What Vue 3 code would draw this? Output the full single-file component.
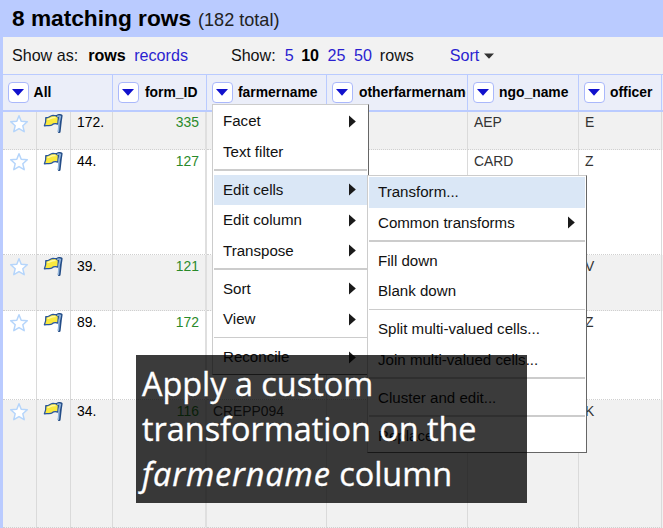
<script setup>
const columns = [
  { name: 'All', key: 'all' },
  { name: 'form_ID', key: 'form' },
  { name: 'farmername', key: 'farmer' },
  { name: 'otherfarmername', key: 'other' },
  { name: 'ngo_name', key: 'ngo' },
  { name: 'officer', key: 'officer' },
]
const rows = [
  { n: '172.', id: '335', farmer: '', ngo: 'AEP', officer: 'E' },
  { n: '44.', id: '127', farmer: '', ngo: 'CARD', officer: 'Z' },
  { n: '39.', id: '121', farmer: '', ngo: '', officer: 'V' },
  { n: '89.', id: '172', farmer: '', ngo: '', officer: 'Z' },
  { n: '34.', id: '116', farmer: 'CREPP094', ngo: '', officer: 'K' },
]
const mainMenu = [
  { label: 'Facet', sub: true },
  { label: 'Text filter' },
  null,
  { label: 'Edit cells', sub: true, active: true },
  { label: 'Edit column', sub: true },
  { label: 'Transpose', sub: true },
  null,
  { label: 'Sort', sub: true },
  { label: 'View', sub: true },
  null,
  { label: 'Reconcile', sub: true },
]
const subMenu = [
  { label: 'Transform...', active: true },
  { label: 'Common transforms', sub: true },
  null,
  { label: 'Fill down' },
  { label: 'Blank down' },
  null,
  { label: 'Split multi-valued cells...' },
  { label: 'Join multi-valued cells...' },
  null,
  { label: 'Cluster and edit...' },
  null,
  { label: 'Replace' },
]
const menus = [
  { key: 'main', items: mainMenu },
  { key: 'sub', items: subMenu },
]
</script>

<template>
  <div class="page">
    <header class="summary"><b>8 matching rows</b><span>(182 total)</span></header>
    <div class="panel">
      <nav class="toolbar">
        <span class="show-as">Show as:</span><b class="mode">rows</b><a class="records">records</a>
        <span class="show">Show:</span><a>5</a><b>10</b><a>25</a><a>50</a><span>rows</span>
        <a class="sort">Sort</a>
        <svg class="caret" width="10" height="6" viewBox="0 0 10 6"><path d="M0 .5H10L5 5.8Z" fill="#333" /></svg>
      </nav>
      <div class="grid head">
        <div v-for="c in columns" :key="c.key" class="th" :class="c.key">
          <button class="drop"><svg width="12" height="7" viewBox="0 0 12 7"><path d="M0 0H12L6 6.7Z" fill="#1111cc" /></svg></button>
          <span>{{ c.name }}</span>
        </div>
      </div>
      <div class="body">
        <div v-for="r in rows" :key="r.n" class="grid row">
          <div class="td icon">
            <svg width="20" height="20" viewBox="0 0 20 20"><path d="M10 1.8L12.2 7.2L18.3 7.7L13.8 11.7L15.2 17.7L10 14.6L4.8 17.7L6.2 11.7L1.7 7.7L7.8 7.2Z" fill="#fff" stroke="#b5d5fb" stroke-width="1.5" stroke-linejoin="round" /></svg>
          </div>
          <div class="td icon">
            <svg width="20" height="20" viewBox="0 0 20 20">
              <path d="M2.8 3.6C5.5 4.4 6.5 2.2 9 1.6C11 1.2 13 2.2 15.6 1.6L14.8 10C12 9.4 10.5 9.4 9.2 10.8C7.5 12.4 4 11 1.4 11.8C2.6 9.4 3 6.5 2.8 3.6Z" fill="#fae93e" stroke="#28559c" stroke-width="1.3" stroke-linejoin="round" />
              <path d="M4.4 5.4C7 5.4 8 3.2 12.6 3.6" fill="none" stroke="#fff9a2" stroke-width="1.4" />
              <path d="M14.6 2C15.8 1.2 17 1.2 18.2 1.8L17.4 7L16.2 17.6" fill="none" stroke="#234c86" stroke-width="2.8" stroke-linecap="round" stroke-linejoin="round" />
              <path d="M14.8 2.2C16 1.8 16.6 1.8 17.4 2.4L16.2 8L15.4 17.2" fill="none" stroke="#93b5db" stroke-width="1.5" stroke-linecap="round" />
            </svg>
          </div>
          <div class="td num">{{ r.n }}</div>
          <div class="td id">{{ r.id }}</div>
          <div class="td">{{ r.farmer }}</div>
          <div class="td"></div>
          <div class="td">{{ r.ngo }}</div>
          <div class="td">{{ r.officer }}</div>
        </div>
      </div>
    </div>

    <div v-for="m in menus" :key="m.key" class="menu" :class="m.key">
      <template v-for="(it, i) in m.items" :key="i">
        <div v-if="it" class="item" :class="{ active: it.active }">
          <span>{{ it.label }}</span>
          <svg v-if="it.sub" width="7" height="13" viewBox="0 0 7 13"><path d="M0 .5L6.8 6.5L0 12.5Z" fill="#1a1a1a" /></svg>
        </div>
        <div v-else class="sep"></div>
      </template>
    </div>

    <div class="caption">Apply a custom<br />transformation on the<br /><i>farmername</i> column</div>
  </div>
</template>

<style>
body { margin: 0; overflow: hidden; }
</style>

<style scoped>
.page { position: relative; box-sizing: border-box; width: 663px; height: 528px; overflow: hidden; background: #bacbff; padding-left: 2.6px; font-family: "Liberation Sans", Arial, sans-serif; color: #111; }
.summary { display: flex; align-items: baseline; box-sizing: border-box; height: 37px; padding: 5px 0 0 9.4px; white-space: nowrap; }
.summary b { font-size: 22.7px; line-height: 26px; color: #000; }
.summary span { font-size: 18.1px; margin-left: 7px; color: #222; }
.panel { height: 491px; display: flex; flex-direction: column; background: #fff; }
.toolbar { display: flex; align-items: center; height: 36.5px; background: #f2f2f2; padding-left: 9.4px; font-size: 16.1px; white-space: nowrap; }
.toolbar a { color: #2a1fd0; }
.toolbar > * + * { margin-left: 6px; }
.toolbar .mode { margin-left: 10px; }
.toolbar .records { margin-left: 8.5px; }
.toolbar .show { margin-left: 43px; margin-right: 3px; }
.toolbar b { color: #000; }
.toolbar a + b { margin-left: 7.5px; }
.toolbar b + a, .toolbar a + a { margin-left: 8.5px; }
.toolbar a + span:not(.show) { margin-left: 8px; }
.toolbar .sort { margin-left: 36px; }
.toolbar .caret { margin-left: 5px; margin-top: 1px; }
.grid { display: grid; grid-template-columns: 34.4px 34px 42px 94px 120px 141px 111px 83px; }
.head { flex: none; box-sizing: border-box; height: 38.5px; border-top: 1.5px solid #bacbff; border-bottom: 2px solid #bacbff; background: #ebeef9; }
.th { display: flex; align-items: center; box-sizing: border-box; min-width: 0; overflow: hidden; padding-left: 5px; border-right: 1px solid #bacbff; font-size: 13.9px; font-weight: bold; color: #000; white-space: nowrap; }
.th.all { grid-column: span 3; }
.th.form span, .th.other span { margin-left: 1px; }
.th.other span { flex: none; width: 107.5px; overflow: hidden; }
.drop { flex: none; display: flex; align-items: center; justify-content: center; box-sizing: border-box; width: 21px; height: 21px; margin: 0 5px 0 0; padding: 0; border: 1.5px solid #aab8fb; border-radius: 4px; background: #fff; }
.body { flex: 1; display: grid; grid-template-rows: 38px 105px 56px 89px 128px; }
.row { background: #fff; }
.row:nth-child(odd) { background: #f1f1f1; }
.td { box-sizing: border-box; padding: 2.6px 6px 0; border-right: 1px solid #dadada; border-bottom: 1px dotted #d0d0d0; font-size: 13.9px; line-height: 17px; color: #333; }
.row:first-child .td:not(.icon) { padding-top: 1.6px; }
.td.icon { padding: 1.5px 0 0 6px; }
.td.icon svg { display: block; }
.td.num { color: #000; }
.td.id { text-align: right; color: #2a8a2a; border-right: 2px solid #dfdfdf; }
.menu { position: absolute; box-sizing: border-box; background: #fff; border: 1px solid; border-color: #ccc #666 #666 #ccc; padding: 1px; }
.menu.main { left: 212px; top: 104px; width: 157px; height: 271px; }
.menu.sub { left: 367px; top: 175px; width: 220px; height: 278px; }
.item { display: flex; align-items: center; justify-content: space-between; height: 30.5px; padding: 0 11px 0 9px; font-size: 15.1px; color: #111; white-space: nowrap; }
.item span { margin-top: -0.6px; }
.sub .item { padding-right: 10px; }
.active { background: #dae7f6; }
.sep { height: 1.5px; margin: 2px 0 4px; background: #ccc; }
.caption { position: absolute; left: 136px; top: 355px; box-sizing: border-box; width: 391px; height: 148px; padding: 6px 0 0 6px; background: rgba(0, 0, 0, 0.77); color: #fff; font-family: "Open Sans", sans-serif; font-size: 32.4px; line-height: 45px; white-space: nowrap; -webkit-text-stroke: 0.35px #fff; }
.caption i { letter-spacing: 0.9px; }
</style>
